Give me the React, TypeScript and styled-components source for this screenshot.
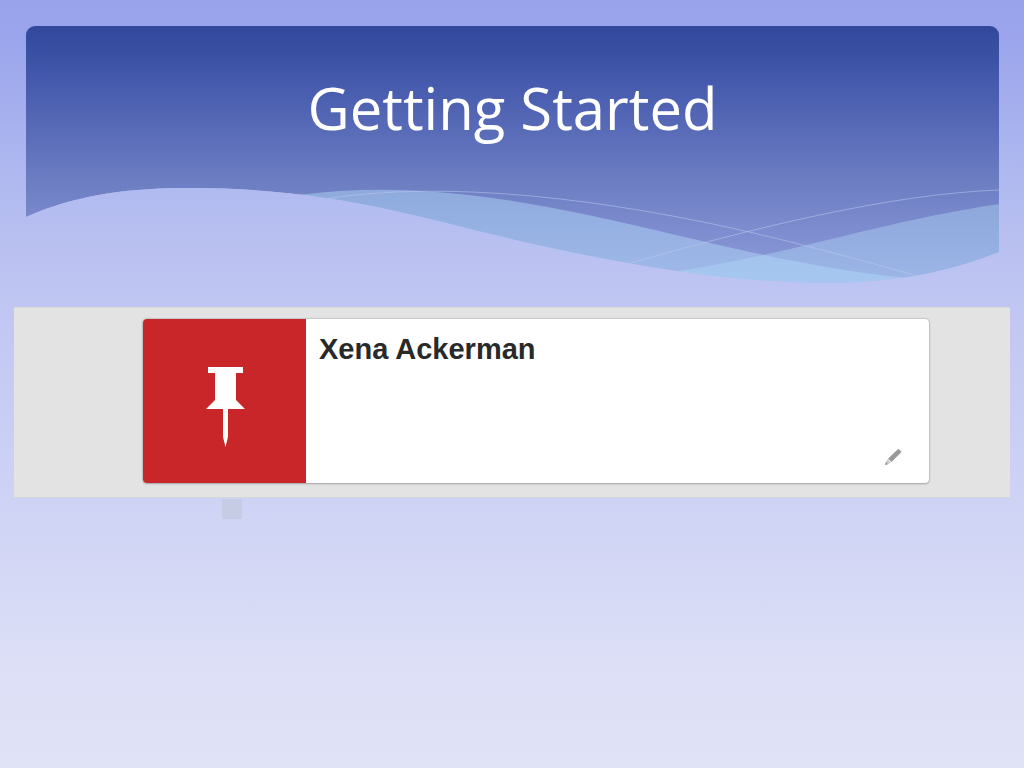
import React from "react";
import styled, { createGlobalStyle } from "styled-components";

const GlobalStyle = createGlobalStyle`
  * { box-sizing: border-box; }
  html { height: 100%; }
  body {
    margin: 0;
    min-height: 100%;
    background: linear-gradient(180deg, #98a3ec 0%, #9aa5ec 5%, #b3bcf0 26%, #c0c6f2 39%, #cfd3f5 66%, #dde0f6 88%, #e0e3f6 100%) no-repeat;
  }
`;

const Slide = styled.main`
  display: flex;
  flex-direction: column;
  padding: 26px 0;
`;

const Banner = styled.header`
  position: relative;
  height: 258px;
  margin: 0 25px 0 26px;
  padding-top: 44px;
  border-radius: 9px 9px 0 0;
  overflow: hidden;
`;

const BannerArt = styled.svg`
  position: absolute;
  inset: 0;
  width: 100%;
  height: 100%;
`;

const Title = styled.h1`
  position: relative;
  margin: 0;
  color: #fff;
  font: 400 58px/76px "Open Sans", sans-serif;
  text-align: center;
`;

const Strip = styled.section`
  margin: 23px 14px 0;
  padding: 12px 81px 15px 129px;
  background: #e3e3e3;
  box-shadow: inset 0 1px 0 #dadada, inset 0 -1px 0 #d4d4d6;
`;

const Card = styled.article`
  display: flex;
  min-height: 164px;
  border-radius: 4px;
  background: #fff;
  box-shadow: 0 0 2px #8c8c8c, 0 1px 2px #b4b4b4;
  overflow: hidden;
`;

const Badge = styled.div`
  display: flex;
  flex: 0 0 163px;
  align-items: center;
  justify-content: center;
  padding-top: 12px;
  background: #c82628;
`;

const PinIcon = styled.svg`
  width: 40px;
  height: 80px;
`;

const Details = styled.div`
  display: flex;
  flex: 1;
  flex-direction: column;
  justify-content: space-between;
  padding: 12px 27px 17px 13px;
`;

const Name = styled.h2`
  margin: 0;
  color: #292929;
  font: 700 29px/36px "Liberation Sans", Arial, sans-serif;
`;

const EditButton = styled.button`
  display: flex;
  align-self: flex-end;
  padding: 0;
  border: 0;
  background: none;
  cursor: pointer;
`;

const Marker = styled.div`
  width: 20px;
  height: 20px;
  margin: 1px 0 0 222px;
  background: #c6cce4;
`;

const WAVE =
  "M26 26H1000V252C955 271 895 283 832 283C730 283 630 266 520 241C420 217 330 188 190 188C135 188 80 193 26 217Z";

export default function App() {
  return (
    <>
      <GlobalStyle />
      <Slide>
        <Banner>
          <BannerArt viewBox="26 26 974 258" preserveAspectRatio="none" aria-hidden="true">
            <defs>
              <linearGradient id="sky" gradientUnits="userSpaceOnUse" x1="0" y1="26" x2="0" y2="284">
                <stop offset="0" stopColor="#31479d" />
                <stop offset="0.1" stopColor="#3950a2" />
                <stop offset="0.25" stopColor="#495daf" />
                <stop offset="0.6" stopColor="#6c7dc2" />
                <stop offset="1" stopColor="#909ddc" />
              </linearGradient>
              <clipPath id="wave">
                <path d={WAVE} />
              </clipPath>
            </defs>
            <g clipPath="url(#wave)">
              <path d={WAVE} fill="url(#sky)" />
              <path
                d="M298 195C420 179 530 201 660 231C740 250 820 269 907 278V284H298Z"
                fill="#b1daf8"
                fillOpacity="0.48"
              />
              <path
                d="M680 271C800 252 880 222 1000 204V284H680Z"
                fill="#b1daf8"
                fillOpacity="0.42"
              />
              <g fill="none" stroke="#bdc9ef" strokeWidth="1" strokeOpacity="0.55">
                <path d="M325 199C450 179 610 200 750 232C810 246 865 261 922 277" />
                <path d="M628 264C750 229 890 194 1000 190" />
              </g>
            </g>
          </BannerArt>
          <Title>Getting Started</Title>
        </Banner>
        <Strip>
          <Card>
            <Badge>
              <PinIcon viewBox="0 0 40 80" aria-hidden="true">
                <path
                  fill="#fff"
                  d="M3 0H38V6H31V33L40 42H23V70L20.500 80L18 70V42H1L10 33V6H3Z"
                />
              </PinIcon>
            </Badge>
            <Details>
              <Name>Xena Ackerman</Name>
              <EditButton type="button" aria-label="Edit profile">
                <svg width="18" height="18" viewBox="0 0 18 18" aria-hidden="true">
                  <path fill="#999" d="M12 3L14.500 0.800L17.500 3.800L15.500 6L7.500 14L4 10.800Z" />
                  <path fill="#c9c9c9" d="M3.500 11.300L7 14.500L3.200 16.500L1.500 14.800Z" />
                  <path fill="#8a8a8a" d="M1.800 14.200L3.800 16.200L1 17Z" />
                </svg>
              </EditButton>
            </Details>
          </Card>
        </Strip>
        <Marker />
      </Slide>
    </>
  );
}
